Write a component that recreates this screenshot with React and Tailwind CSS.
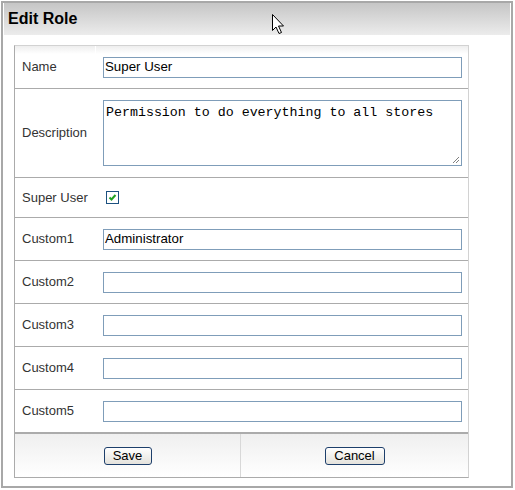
import React from "react";

const rows = [
  { label: "Custom1", value: "Administrator" },
  { label: "Custom2", value: "" },
  { label: "Custom3", value: "" },
  { label: "Custom4", value: "" },
  { label: "Custom5", value: "" },
];

function Field({ value }) {
  return (
    <div className="w-[359px] h-[21px] border border-[#7f9db9] bg-white flex items-center px-[1px] text-[13.3px] text-black">
      {value}
    </div>
  );
}

function Row({ label, children, h }) {
  return (
    <div className={`flex ${h} border-b border-[#ababab]`}>
      <div className="w-[81px] flex items-center pl-[7px] text-[13px] text-[#333]">{label}</div>
      <div className="flex-1 flex items-center pl-[7px]">{children}</div>
    </div>
  );
}

function Button({ children, w }) {
  return (
    <button
      className={`${w} h-[18px] border border-[#1d3f6b] rounded-[3px] bg-gradient-to-b from-white to-[#e4e2dc] text-[13px] text-black leading-none`}
    >
      {children}
    </button>
  );
}

function Cursor() {
  return (
    <svg className="absolute left-[271px] top-[13px]" width="14" height="22" viewBox="0 0 14 22">
      <path
        d="M1.5 1.5 L1.5 17.5 L5 14 L8 20.5 L10.5 19.5 L7.5 13 L12.5 13 Z"
        fill="white"
        stroke="black"
        strokeWidth="1"
      />
    </svg>
  );
}

export default function App() {
  return (
    <div
      className="relative w-[515px] h-[490px] bg-white pt-[1px] pl-[1px]"
      style={{ fontFamily: '"Liberation Sans", Arial, sans-serif' }}
    >
      <div className="w-[512px] h-[487px] border-[2px] border-[#a8a8a8] bg-white flex flex-col">
        <div className="h-[32px] mx-[1px] bg-gradient-to-b from-[#c6c6c6] to-[#ececec] flex items-center pl-[4px] pr-[2px]">
          <span className="text-[16px] font-bold text-black">Edit Role</span>
        </div>

        <div className="ml-[11px] mt-[10px] w-[455px] border border-[#d2d2d2] border-l-[#ababab] border-b-[#ababab]">
          <div className="relative">
            <div className="absolute inset-x-0 top-0 h-[8px] bg-gradient-to-b from-[#eeeeee] to-white" />
            <div className="absolute left-[80px] top-0 h-[8px] w-[1px] bg-white" />
            <div className="relative">
              <Row label="Name" h="h-[43px]">
                <Field value="Super User" />
              </Row>
            </div>
          </div>

          <Row label="Description" h="h-[89px]">
            <div
              className="relative w-[359px] h-[66px] border border-[#7f9db9] bg-white pl-[2px] pt-[2px] text-[13.3px] text-black"
              style={{ fontFamily: '"Liberation Mono", "Courier New", monospace' }}
            >
              Permission to do everything to all stores
              <svg className="absolute right-[1px] bottom-[1px]" width="9" height="9" viewBox="0 0 9 9">
                <path d="M8 2 L2 8 M8 5 L5 8" stroke="#808080" strokeWidth="1" />
              </svg>
            </div>
          </Row>

          <Row label="Super User" h="h-[40px]">
            <div className="ml-[3px] w-[13px] h-[13px] border border-[#1c5180] bg-white flex items-center justify-center">
              <svg width="9" height="9" viewBox="0 0 9 9">
                <path d="M1.5 4.5 L3.5 6.5 L7.5 2" stroke="#21a121" strokeWidth="2" fill="none" />
              </svg>
            </div>
          </Row>

          {rows.map((r) => (
            <Row key={r.label} label={r.label} h="h-[43px]">
              <Field value={r.value} />
            </Row>
          ))}

          <div className="flex h-[44px] border-t border-[#ababab] bg-gradient-to-b from-[#efefef] to-white">
            <div className="w-[226px] border-r border-[#d8d8d8] flex items-center justify-center">
              <Button w="w-[48px]">Save</Button>
            </div>
            <div className="flex-1 flex items-center justify-center">
              <Button w="w-[60px]">Cancel</Button>
            </div>
          </div>
        </div>
      </div>
      <Cursor />
    </div>
  );
}
